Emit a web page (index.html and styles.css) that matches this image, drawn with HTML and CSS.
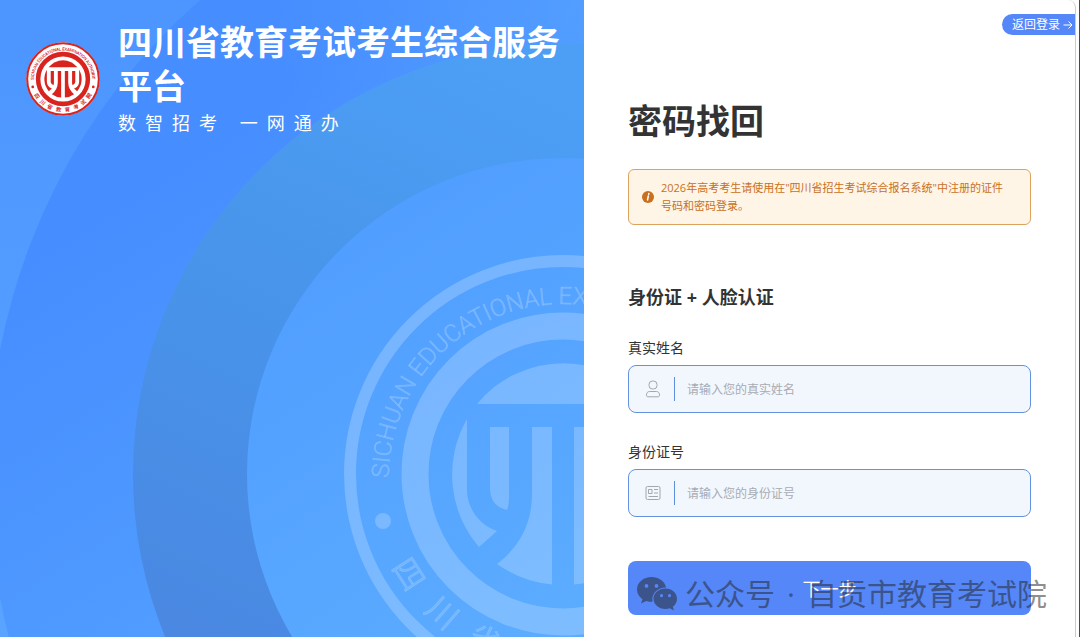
FILE: index.html
```
<!DOCTYPE html>
<html lang="zh-CN">
<head>
  <meta charset="UTF-8">
  <meta name="viewport" content="width=device-width, initial-scale=1.0">
  <title>密码找回</title>
  <link rel="stylesheet" href="styles.css">
</head>
<body>
  <div class="container">
    <section class="banner">
      <svg class="banner-bg" viewBox="0 0 584 637" preserveAspectRatio="xMaxYMax slice" aria-hidden="true">
        <defs>
          <linearGradient id="gBase" x1="0" y1="0" x2="0" y2="1">
            <stop offset="0" stop-color="#4d95ff"/>
            <stop offset="1" stop-color="#58a4ff"/>
          </linearGradient>
          <linearGradient id="gOuter" gradientUnits="userSpaceOnUse" x1="60" y1="230" x2="270" y2="560">
            <stop offset="0" stop-color="#468dff"/>
            <stop offset="1" stop-color="#509cff"/>
          </linearGradient>
          <linearGradient id="gTop" gradientUnits="userSpaceOnUse" x1="280" y1="60" x2="584" y2="0">
            <stop offset="0" stop-color="#529dff" stop-opacity="0"/>
            <stop offset="1" stop-color="#529dff"/>
          </linearGradient>
          <linearGradient id="gMid" gradientUnits="userSpaceOnUse" x1="480" y1="60" x2="200" y2="637">
            <stop offset="0" stop-color="#4c9ff5"/>
            <stop offset="0.4" stop-color="#4896ec"/>
            <stop offset="1" stop-color="#4a88e2"/>
          </linearGradient>
          <linearGradient id="gInner" gradientUnits="userSpaceOnUse" x1="300" y1="200" x2="560" y2="600">
            <stop offset="0" stop-color="#4f9cff"/>
            <stop offset="1" stop-color="#5babff"/>
          </linearGradient>
          <!-- 徽标 -->
          <symbol id="emblem" viewBox="-220 -220 440 440">
            <g fill="none" stroke="currentColor">
              <circle r="213" stroke-width="12"/>
              <circle r="148" stroke-width="27"/>
            </g>
            <g fill="currentColor">
              <path d="M-86-70A111 111 0 0 1 86-70Z"/>
              <g id="half">
                <path d="M-96-55V16C-96 34-84 51-66 57L-84 73A111 111 0 0 1-96-55Z"/>
                <path d="M-73-47H-54V24Q-54 31-56 36Q-73 32-73 14Z"/>
                <path d="M-31-47H-11V110.500A111 111 0 0 1-66 90Q-31 63-31 20Z"/>
              </g>
              <use href="#half" transform="scale(-1 1)"/>
              <circle cx="-180" cy="47" r="8"/>
              <circle cx="180" cy="47" r="8"/>
            </g>
            <path id="ringPath" d="M-174 4A174 174 0 1 1 174 4" fill="none"/>
            <g class="emblem-text" fill="currentColor" stroke="currentColor">
              <text class="emblem-en"><textPath href="#ringPath">SICHUAN EDUCATIONAL EXAMINATION AUTHORITY</textPath></text>
              <g class="emblem-cn">
                <text y="195" transform="rotate(57)">四</text>
                <text y="195" transform="rotate(41)">川</text>
                <text y="195" transform="rotate(25)">省</text>
                <text y="195" transform="rotate(8)">教</text>
                <text y="195" transform="rotate(-8)">育</text>
                <text y="195" transform="rotate(-25)">考</text>
                <text y="195" transform="rotate(-41)">试</text>
                <text y="195" transform="rotate(-57)">院</text>
              </g>
            </g>
          </symbol>
        </defs>
        <rect width="584" height="637" fill="url(#gBase)"/>
        <ellipse cx="563" cy="474" rx="575" ry="611" fill="url(#gOuter)"/>
        <ellipse cx="563" cy="474" rx="575" ry="611" fill="url(#gTop)"/>
        <circle cx="563" cy="474" r="430" fill="url(#gMid)"/>
        <circle cx="563" cy="474" r="316" fill="url(#gInner)"/>
        <use class="emblem-large" href="#emblem" x="343" y="254" width="440" height="440"/>
      </svg>
      <header class="brand">
        <svg class="logo" viewBox="-220 -220 440 440" role="img" aria-label="四川省教育考试院">
          <circle r="218" fill="#fff"/>
          <use href="#emblem" x="-220" y="-220" width="440" height="440"/>
        </svg>
        <div>
          <h1 class="title">四川省教育考试考生综合服务平台</h1>
          <p class="slogan">数智招考 一网通办</p>
        </div>
      </header>
    </section>

    <main class="panel">
      <nav class="top">
        <a class="back" href="#">返回登录
          <svg viewBox="0 0 10 10" width="10" height="10"><path d="M0.500 5h8.500M5.500 1.500L9 5 5.500 8.500"/></svg>
        </a>
      </nav>
      <div class="content">
        <h2 class="heading">密码找回</h2>
        <div class="notice">
          <svg class="notice-icon" viewBox="0 0 12 12"><circle cx="6" cy="6" r="6" fill="#c8701e"/><path d="M6.300 5L5.500 9M6.800 2.500L6.700 3.300" stroke="#fff" stroke-width="1.500" stroke-linecap="round"/></svg>
          <p>2026年高考考生请使用在"四川省招生考试综合报名系统"中注册的证件号码和密码登录。</p>
        </div>
        <form class="form">
          <h3 class="subheading">身份证 + 人脸认证</h3>
          <label class="label" for="realName">真实姓名</label>
          <div class="field">
            <svg class="field-icon" viewBox="0 0 16 18"><rect x="4" y="1" width="8" height="8" rx="3.500"/><path d="M4.500 11.500h7c2 0 3 1.500 3 3.500 0 1.200-.5 1.800-1.500 1.800H3c-1 0-1.500-.6-1.500-1.800 0-2 1-3.500 3-3.500z"/></svg>
            <input type="text" id="realName" placeholder="请输入您的真实姓名">
          </div>
          <label class="label" for="idCard">身份证号</label>
          <div class="field">
            <svg class="field-icon" viewBox="0 0 16 18"><rect x="1" y="2.500" width="14" height="13" rx="1.500"/><path d="M3.500 5.500h3.500v4h-3.500zM9 5.500h4M9 9h4M3.500 12.500h9.500"/></svg>
            <input type="text" id="idCard" placeholder="请输入您的身份证号">
          </div>
          <div class="submit">
            <button type="submit" class="next">下一步</button>
            <!-- 公众号水印 -->
            <div class="watermark">
              <svg viewBox="0 0 40 34" width="40" height="34">
                <path fill-rule="evenodd" d="M14.500 0C6.500 0 0 5.500 0 12.500c0 4 2.200 7.500 5.500 9.800L4 26.500l5.200-2.600c1.900.6 4 .9 6.300.9-1.300-8 4.500-14 13.500-14.200C28 4.300 21.800 0 14.500 0zM9.500 7a1.900 1.900 0 1 1 0 3.800 1.900 1.900 0 0 1 0-3.800zM19.500 7a1.900 1.900 0 1 1 0 3.800 1.900 1.900 0 0 1 0-3.800z"/>
                <path fill-rule="evenodd" d="M28.500 11.500C22 11.500 16.500 16 16.500 21.700S22 32 28.500 32c1.600 0 3-.2 4.300-.7L37 33.500l-1.200-3.700c2.600-2 4.200-4.800 4.200-8.100 0-5.700-5-10.200-11.500-10.200zM24.500 17a1.600 1.600 0 1 1 0 3.200 1.600 1.600 0 0 1 0-3.200zM32.500 17a1.600 1.600 0 1 1 0 3.200 1.600 1.600 0 0 1 0-3.200z"/>
              </svg>
              <span>公众号</span><span class="dot">·</span><span>自贡市教育考试院</span>
            </div>
          </div>
        </form>
      </div>
    </main>
  </div>
</body>
</html>
```
FILE: styles.css
```
* {
  box-sizing: border-box;
}
body, h1, h2, h3, p {
  margin: 0;
}
body {
  border-right: 1px solid #4a4a4a;
  background-color: #fff;
  color: #333;
  font-family: "Open Sans", "Noto Sans CJK SC", sans-serif;
}

.container {
  display: grid;
  grid-template-columns: minmax(0, 146fr) minmax(0, 123fr);
  min-height: 100vh;
  margin-right: 3px;
}

/* 左侧 */
.banner {
  position: relative;
  overflow: hidden;
  background-color: #4a93fa;
}
.banner-bg {
  position: absolute;
  width: 100%;
  height: 100%;
}
.emblem-large {
  --text-opacity: .8;
  --text-stroke: .5px;
  color: rgba(255, 255, 255, .21);
}
.emblem-text {
  opacity: var(--text-opacity);
  stroke-width: var(--text-stroke);
}
.emblem-en {
  font-family: Roboto, "Liberation Sans", sans-serif;
  font-size: 24px;
  font-weight: 300;
}
.emblem-cn {
  font-family: "Noto Sans CJK SC", sans-serif;
  font-size: 31px;
  text-anchor: middle;
}
.brand {
  position: relative;
  display: flex;
  align-items: center;
  gap: 18px;
  padding: 20px 0 0 26px;
  color: #fff;
}
.logo {
  --text-opacity: 1;
  --text-stroke: 1px;
  flex: none;
  width: 74px;
  height: 74px;
  color: #d9231f;
}
.title {
  font-size: 34px;
  line-height: 44px;
}
.slogan {
  font-size: 18px;
  line-height: 30px;
  letter-spacing: 9px;
}

/* 右侧 */
.panel {
  border-right: 1px solid #ccc;
  border-top-right-radius: 8px;
}
.top {
  display: flex;
  justify-content: flex-end;
  padding-top: 14px;
}
.back {
  display: flex;
  align-items: center;
  gap: 3px;
  padding: 0 2px 0 10px;
  border-radius: 12px 0 0 12px;
  background-color: #5687f8;
  color: #fff;
  font-size: 12px;
  line-height: 21px;
  text-decoration: none;
}
.back svg {
  fill: none;
  stroke: #fff;
}
.content {
  padding: 62px 44px 22px;
}
.heading {
  margin-bottom: 24px;
  font-size: 34px;
  line-height: 48px;
}
.notice {
  display: flex;
  align-items: center;
  gap: 7px;
  padding: 9px 20px 9px 13px;
  border: 1px solid #dda35c;
  border-radius: 6px;
  background-color: #fff5e6;
  color: #c8701e;
  font-size: 11px;
  line-height: 18px;
}
.notice-icon {
  flex: none;
  width: 12px;
  height: 12px;
}
.subheading {
  margin: 59px 0 28px;
  font-size: 18px;
  line-height: 26px;
}
.label {
  display: block;
  margin-bottom: 7px;
  font-size: 14px;
  line-height: 20px;
}
.field {
  display: flex;
  align-items: center;
  height: 48px;
  margin-bottom: 29px;
  padding: 0 16px;
  border: 1px solid #6592e0;
  border-radius: 8px;
  background-color: #f2f7fe;
}
.field-icon {
  flex: none;
  width: 16px;
  height: 18px;
  margin-right: 13px;
  fill: none;
  stroke: #a3a6ab;
}
.field input {
  flex: 1;
  min-width: 0;
  height: 24px;
  padding: 0 12px;
  border: 0;
  border-left: 1px solid #5f8fdc;
  outline: 0;
  background-color: transparent;
  font-family: inherit;
  font-size: 12px;
}
.field input::placeholder {
  color: #a8abb2;
}
.submit {
  position: relative;
  margin-top: 44px;
}
.next {
  display: block;
  width: 100%;
  height: 54px;
  border: 0;
  border-radius: 8px;
  background-color: #5687f8;
  color: #fff;
  font-family: inherit;
  font-size: 18px;
}
.watermark {
  position: absolute;
  top: 12px;
  left: 9px;
  display: flex;
  align-items: center;
  gap: 8px;
  color: #222;
  font-size: 30px;
  line-height: 42px;
  white-space: nowrap;
  opacity: .5;
  pointer-events: none;
}
.watermark .dot {
  padding: 0 4px;
}
.watermark svg {
  fill: #222;
}
```
